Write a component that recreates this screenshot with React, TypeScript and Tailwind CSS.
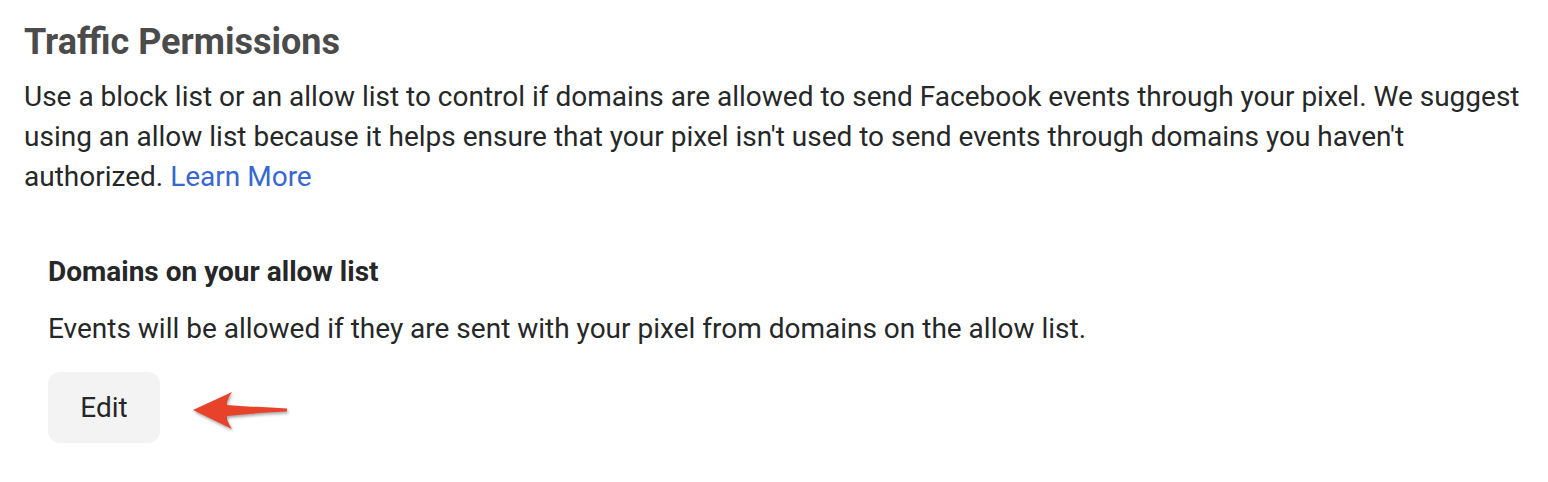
export default function App() {
  return (
    <div className="w-[1548px] h-[482px] bg-white font-['Roboto',sans-serif] text-[#262728] px-6 pt-[20px]">
      <h1 className="text-[36px] leading-[44px] font-bold text-[#4b4b4b]">Traffic Permissions</h1>
      <p className="mt-[13px] text-[28px] leading-[40px] w-[1500px]">
        Use a block list or an allow list to control if domains are allowed to send Facebook events through your pixel. We suggest using an allow list because it helps ensure that your pixel isn't used to send events through domains you haven't authorized.{' '}
        <span className="text-[#3867d1]">Learn More</span>
      </p>
      <div className="pl-6 mt-[57px]">
        <h2 className="text-[28px] leading-[36px] font-bold">Domains on your allow list</h2>
        <p className="mt-[19px] text-[28px] leading-[40px]">
          Events will be allowed if they are sent with your pixel from domains on the allow list.
        </p>
        <div className="flex items-start mt-[23px]">
          <button className="w-[112px] h-[71px] rounded-[12px] bg-[#f3f3f3] text-[28px] text-[#262728]">Edit</button>
          <svg width="100" height="46" viewBox="0 0 100 46" className="ml-[32px] mt-[17px]" style={{ filter: 'drop-shadow(1px 2px 1.5px rgba(0,0,0,0.35))' }}>
            <path d="M1 21 L40 3 Q34 12 35 16 Q62 18 95 19.5 L95 22.5 Q62 24 35 27 Q34 31 40 40 Z" fill="#e8432a" />
          </svg>
        </div>
      </div>
    </div>
  )
}
